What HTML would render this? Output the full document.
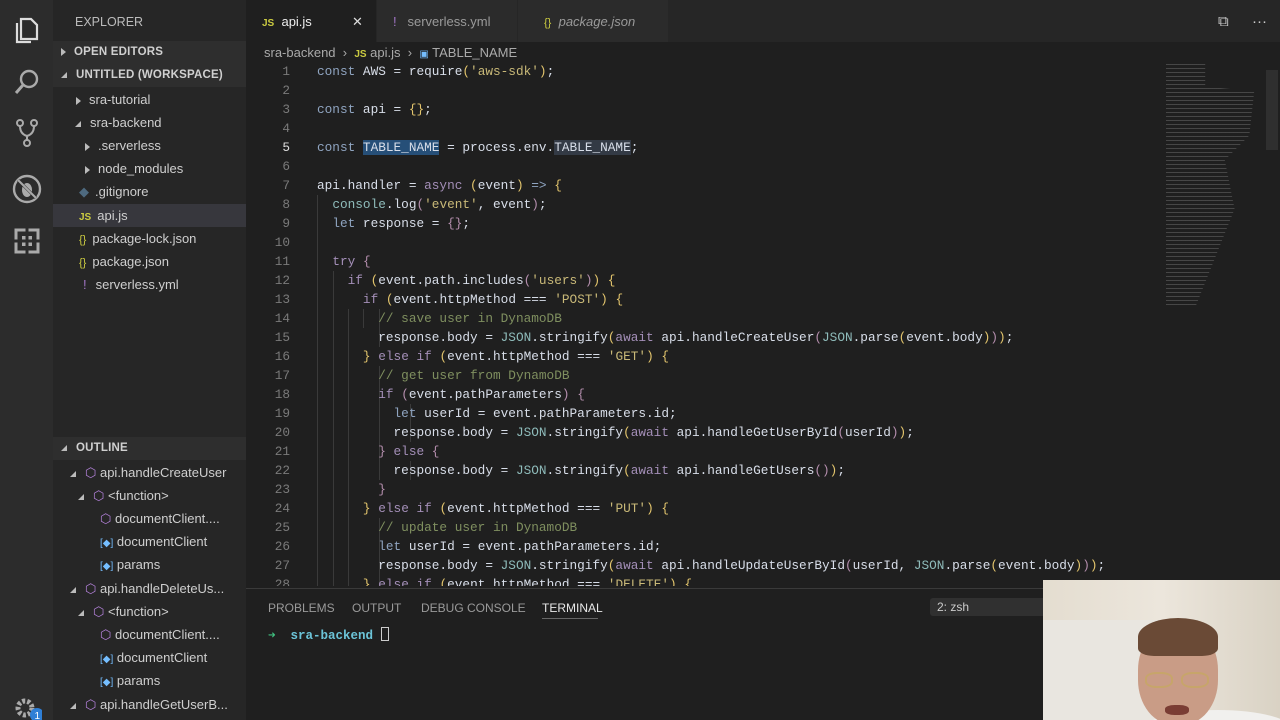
<!DOCTYPE html>
<html><head><meta charset="utf-8"><style>
*{margin:0;padding:0;box-sizing:border-box}
body{width:1280px;height:720px;overflow:hidden;background:#1f1f1f;font-family:"Liberation Sans",sans-serif;position:relative;color:#ccc}
.abs{position:absolute}
#act{left:0;top:0;width:53px;height:720px;background:#2c2c2c}
#side{left:53px;top:0;width:193px;height:720px;background:#262626}
#tabs{left:246px;top:0;width:1034px;height:42px;background:#262626}
.tab{position:absolute;top:0;height:42px;font-size:13px;line-height:44px;color:#9a9a9a}
.row{position:absolute;left:53px;width:193px;height:23px;line-height:23px;font-size:13px;color:#cfcfcf;white-space:nowrap;overflow:hidden}
.hdr{font-weight:bold;font-size:11.5px;color:#d0d0d0;letter-spacing:.2px}
.tri{display:inline-block;width:0;height:0;border-left:5px solid #bbb;border-top:4px solid transparent;border-bottom:4px solid transparent;margin-right:8px;vertical-align:middle}
.dn{display:inline-block;width:0;height:0;border-right:6px solid #bbb;border-top:6px solid transparent;margin-right:9px;vertical-align:middle}
#code{left:250px;top:62px;width:920px;height:524px;overflow:hidden;font-family:"Liberation Mono",monospace;font-size:12.75px;line-height:19.02px;white-space:pre;color:#d8dee9}
.ln{position:absolute;left:0;width:40px;text-align:right;color:#7a7a7a}
.cl{position:absolute;left:67px}
.k{color:#8fa4c0}.kp{color:#a48fb8}.s{color:#c9b978}.c{color:#7f8f5f}.j{color:#8fbcbb}.y{color:#e3c56d}.p{color:#b48ead}
.sel{background:#264f78}
.ig{position:absolute;width:1px;background:#3a3a3a}
#panel{left:246px;top:588px;width:1034px;height:132px;background:#1f1f1f;border-top:1px solid #3a3a3a}
.pt{position:absolute;top:12px;font-size:12px;color:#9a9a9a}
</style></head><body>
<div id="act" class="abs">
<svg class="abs" style="left:14px;top:16px" width="26" height="28" viewBox="0 0 26 28"><path d="M7 3h10l6 6v14H7z" fill="none" stroke="#ddd" stroke-width="2.2"/><path d="M3 7v19h14" fill="none" stroke="#ddd" stroke-width="2.2"/></svg>
<svg class="abs" style="left:13px;top:68px" width="28" height="28"><circle cx="16" cy="11" r="8" fill="none" stroke="#aaa" stroke-width="2.4"/><path d="M10 17L3 25" stroke="#aaa" stroke-width="3"/></svg>
<svg class="abs" style="left:15px;top:118px" width="24" height="30"><circle cx="5" cy="5" r="3" fill="none" stroke="#aaa" stroke-width="2"/><circle cx="19" cy="5" r="3" fill="none" stroke="#aaa" stroke-width="2"/><circle cx="12" cy="25" r="3" fill="none" stroke="#aaa" stroke-width="2"/><path d="M5 8q0 8 7 10M19 8q0 8-7 10v4" fill="none" stroke="#aaa" stroke-width="2"/></svg>
<svg class="abs" style="left:11px;top:173px" width="32" height="32"><circle cx="16" cy="16" r="13" fill="none" stroke="#aaa" stroke-width="2.4"/><ellipse cx="16" cy="17" rx="5" ry="7" fill="#aaa"/><path d="M7 7l18 18" stroke="#2c2c2c" stroke-width="3"/><path d="M7 7l18 18" stroke="#aaa" stroke-width="2"/></svg>
<svg class="abs" style="left:14px;top:228px" width="26" height="26"><rect x="2" y="2" width="22" height="22" fill="none" stroke="#aaa" stroke-width="3"/><rect x="8" y="8" width="10" height="10" fill="#aaa"/><path d="M13 0v26M0 13h26" stroke="#2c2c2c" stroke-width="3"/></svg>
<svg class="abs" style="left:12px;top:695px" width="30" height="25"><circle cx="13" cy="13" r="7" fill="none" stroke="#aaa" stroke-width="5" stroke-dasharray="3 2"/><circle cx="25" cy="20" r="7" fill="#2f7fd6"/><text x="22.5" y="24" font-size="10" fill="#fff" font-family="Liberation Sans">1</text></svg>
</div>
<div id="side" class="abs"></div>
<div class="row" style="top:11px;left:75px;font-size:12.5px;color:#bbb">EXPLORER</div>
<div class="row hdr" style="top:41px;background:#2e2e2e;padding-left:8px"><span class="tri"></span>OPEN EDITORS</div>
<div class="row hdr" style="top:64px;background:#2e2e2e;padding-left:8px"><span class="dn"></span>UNTITLED (WORKSPACE)</div>
<div class="row" style="top:88px;padding-left:23px"><span class="tri"></span>sra-tutorial</div>
<div class="row" style="top:111px;padding-left:22px"><span class="dn"></span>sra-backend</div>
<div class="row" style="top:134px;padding-left:32px"><span class="tri"></span>.serverless</div>
<div class="row" style="top:157px;padding-left:32px"><span class="tri"></span>node_modules</div>
<div class="row" style="top:180px;padding-left:26px"><span style="color:#4e6a80;margin-right:6px">◆</span>.gitignore</div>
<div class="row" style="top:204px;background:#37373d;padding-left:26px"><span style="color:#cbcb41;font-size:10px;font-weight:bold;margin-right:6px">JS</span>api.js</div>
<div class="row" style="top:227px;padding-left:26px"><span style="color:#cbcb41;font-size:11px;margin-right:6px">{}</span>package-lock.json</div>
<div class="row" style="top:250px;padding-left:26px"><span style="color:#cbcb41;font-size:11px;margin-right:6px">{}</span>package.json</div>
<div class="row" style="top:273px;padding-left:30px"><span style="color:#a074c4;margin-right:9px">!</span>serverless.yml</div>
<div class="row hdr" style="top:437px;background:#2e2e2e;padding-left:8px"><span class="dn"></span>OUTLINE</div>
<div class="row" style="top:461px;padding-left:17px"><span class="dn"></span><span style="color:#b180d7">⬡</span> api.handleCreateUser</div>
<div class="row" style="top:484px;padding-left:25px"><span class="dn"></span><span style="color:#b180d7">⬡</span> &lt;function&gt;</div>
<div class="row" style="top:507px;padding-left:47px"><span style="color:#b180d7">⬡</span> documentClient....</div>
<div class="row" style="top:530px;padding-left:47px"><span style="color:#75beff;font-size:10px">[◆]</span> documentClient</div>
<div class="row" style="top:553px;padding-left:47px"><span style="color:#75beff;font-size:10px">[◆]</span> params</div>
<div class="row" style="top:577px;padding-left:17px"><span class="dn"></span><span style="color:#b180d7">⬡</span> api.handleDeleteUs...</div>
<div class="row" style="top:600px;padding-left:25px"><span class="dn"></span><span style="color:#b180d7">⬡</span> &lt;function&gt;</div>
<div class="row" style="top:623px;padding-left:47px"><span style="color:#b180d7">⬡</span> documentClient....</div>
<div class="row" style="top:646px;padding-left:47px"><span style="color:#75beff;font-size:10px">[◆]</span> documentClient</div>
<div class="row" style="top:669px;padding-left:47px"><span style="color:#75beff;font-size:10px">[◆]</span> params</div>
<div class="row" style="top:693px;padding-left:17px"><span class="dn"></span><span style="color:#b180d7">⬡</span> api.handleGetUserB...</div>

<div id="tabs" class="abs">
<div class="tab" style="left:0;width:130px;background:#1f1f1f;color:#eee;padding-left:16px"><span style="color:#cbcb41;font-size:10px;font-weight:bold">JS</span>&nbsp; api.js<span style="position:absolute;left:106px;color:#ddd">✕</span></div>
<div class="tab" style="left:131px;width:140px;background:#2b2b2b;padding-left:16px"><span style="color:#a074c4">!</span>&nbsp;&nbsp; serverless.yml</div>
<div class="tab" style="left:272px;width:150px;background:#2b2b2b;padding-left:26px;font-style:italic"><span style="color:#cbcb41;font-style:normal;font-size:11px">{}</span>&nbsp; package.json</div>
<div class="tab" style="left:972px;color:#ccc;font-size:15px">⧉</div>
<div class="tab" style="left:1006px;color:#ccc;font-size:15px">···</div>
</div>
<div class="abs" style="left:264px;top:44px;font-size:13px;color:#aaa;line-height:17px">sra-backend &nbsp;›&nbsp; <span style="color:#cbcb41;font-size:10px;font-weight:bold">JS</span> api.js &nbsp;›&nbsp; <span style="color:#75beff;font-size:10px">▣</span> TABLE_NAME</div>

<div id="code" class="abs">
<div class="ig" style="left:67px;top:133px;height:400px"></div>
<div class="ig" style="left:83px;top:209px;height:330px"></div>
<div class="ig" style="left:98px;top:247px;height:280px"></div>
<div class="ig" style="left:113px;top:247px;height:19px"></div>
<div class="ig" style="left:129px;top:247px;height:38px"></div>
<div class="ig" style="left:129px;top:304px;height:114px"></div>
<div class="ig" style="left:129px;top:456px;height:76px"></div>
<div class="ig" style="left:160px;top:342px;height:38px"></div>
<div class="ig" style="left:160px;top:399px;height:19px"></div>
<div class="ln" style="top:0">1</div><div class="cl" style="top:0"><span class="k">const</span> AWS = require<span class="y">(</span><span class="s">'aws-sdk'</span><span class="y">)</span>;</div>
<div class="ln" style="top:19px">2</div>
<div class="ln" style="top:38px">3</div><div class="cl" style="top:38px"><span class="k">const</span> api = <span class="y">{}</span>;</div>
<div class="ln" style="top:57px">4</div>
<div class="ln" style="top:76px;color:#ddd">5</div><div class="cl" style="top:76px"><span class="k">const</span> <span class="sel">TABLE_NAME</span> = process.env.<span style="background:#333a45">TABLE_NAME</span>;</div>
<div class="ln" style="top:95px">6</div>
<div class="ln" style="top:114px">7</div><div class="cl" style="top:114px">api.handler = <span class="kp">async</span> <span class="y">(</span>event<span class="y">)</span> <span class="k">=&gt;</span> <span class="y">{</span></div>
<div class="ln" style="top:133px">8</div><div class="cl" style="top:133px">  <span class="j">console</span>.log<span class="p">(</span><span class="s">'event'</span>, event<span class="p">)</span>;</div>
<div class="ln" style="top:152px">9</div><div class="cl" style="top:152px">  <span class="k">let</span> response = <span class="p">{}</span>;</div>
<div class="ln" style="top:171px">10</div>
<div class="ln" style="top:190px">11</div><div class="cl" style="top:190px">  <span class="kp">try</span> <span class="p">{</span></div>
<div class="ln" style="top:209px">12</div><div class="cl" style="top:209px">    <span class="kp">if</span> <span class="y">(</span>event.path.includes<span class="p">(</span><span class="s">'users'</span><span class="p">)</span><span class="y">)</span> <span class="y">{</span></div>
<div class="ln" style="top:228px">13</div><div class="cl" style="top:228px">      <span class="kp">if</span> <span class="y">(</span>event.httpMethod === <span class="s">'POST'</span><span class="y">)</span> <span class="y">{</span></div>
<div class="ln" style="top:247px">14</div><div class="cl" style="top:247px">        <span class="c">// save user in DynamoDB</span></div>
<div class="ln" style="top:266px">15</div><div class="cl" style="top:266px">        response.body = <span class="j">JSON</span>.stringify<span class="y">(</span><span class="kp">await</span> api.handleCreateUser<span class="p">(</span><span class="j">JSON</span>.parse<span class="y">(</span>event.body<span class="y">)</span><span class="p">)</span><span class="y">)</span>;</div>
<div class="ln" style="top:285px">16</div><div class="cl" style="top:285px">      <span class="y">}</span> <span class="kp">else if</span> <span class="y">(</span>event.httpMethod === <span class="s">'GET'</span><span class="y">)</span> <span class="y">{</span></div>
<div class="ln" style="top:304px">17</div><div class="cl" style="top:304px">        <span class="c">// get user from DynamoDB</span></div>
<div class="ln" style="top:323px">18</div><div class="cl" style="top:323px">        <span class="kp">if</span> <span class="p">(</span>event.pathParameters<span class="p">)</span> <span class="p">{</span></div>
<div class="ln" style="top:342px">19</div><div class="cl" style="top:342px">          <span class="k">let</span> userId = event.pathParameters.id;</div>
<div class="ln" style="top:361px">20</div><div class="cl" style="top:361px">          response.body = <span class="j">JSON</span>.stringify<span class="y">(</span><span class="kp">await</span> api.handleGetUserById<span class="p">(</span>userId<span class="p">)</span><span class="y">)</span>;</div>
<div class="ln" style="top:380px">21</div><div class="cl" style="top:380px">        <span class="p">}</span> <span class="kp">else</span> <span class="p">{</span></div>
<div class="ln" style="top:399px">22</div><div class="cl" style="top:399px">          response.body = <span class="j">JSON</span>.stringify<span class="y">(</span><span class="kp">await</span> api.handleGetUsers<span class="p">()</span><span class="y">)</span>;</div>
<div class="ln" style="top:418px">23</div><div class="cl" style="top:418px">        <span class="p">}</span></div>
<div class="ln" style="top:437px">24</div><div class="cl" style="top:437px">      <span class="y">}</span> <span class="kp">else if</span> <span class="y">(</span>event.httpMethod === <span class="s">'PUT'</span><span class="y">)</span> <span class="y">{</span></div>
<div class="ln" style="top:456px">25</div><div class="cl" style="top:456px">        <span class="c">// update user in DynamoDB</span></div>
<div class="ln" style="top:475px">26</div><div class="cl" style="top:475px">        <span class="k">let</span> userId = event.pathParameters.id;</div>
<div class="ln" style="top:494px">27</div><div class="cl" style="top:494px">        response.body = <span class="j">JSON</span>.stringify<span class="y">(</span><span class="kp">await</span> api.handleUpdateUserById<span class="p">(</span>userId, <span class="j">JSON</span>.parse<span class="y">(</span>event.body<span class="y">)</span><span class="p">)</span><span class="y">)</span>;</div>
<div class="ln" style="top:513px">28</div><div class="cl" style="top:513px">      <span class="y">}</span> <span class="kp">else if</span> <span class="y">(</span>event.httpMethod === <span class="s">'DELETE'</span><span class="y">)</span> <span class="y">{</span></div>
</div>
<div class="abs" style="left:1166px;top:62px;width:98px;height:245px;opacity:.45;background:repeating-linear-gradient(#1f1f1f 0 2px,#777 2px 3px,#1f1f1f 3px 4px);clip-path:polygon(0 0,40% 0,40% 10%,90% 12%,85% 30%,60% 40%,70% 60%,50% 80%,30% 100%,0 100%)"></div>
<div class="abs" style="left:1266px;top:70px;width:12px;height:80px;background:#2f2f2f"></div>

<div id="panel" class="abs">
<div class="pt" style="left:22px">PROBLEMS</div>
<div class="pt" style="left:106px">OUTPUT</div>
<div class="pt" style="left:175px">DEBUG CONSOLE</div>
<div class="pt" style="left:296px;color:#e7e7e7">TERMINAL</div>
<div class="abs" style="left:296px;top:29px;width:56px;height:1px;background:#666"></div>
<div class="abs" style="left:684px;top:9px;width:120px;height:18px;background:#303030;border-radius:3px;font-size:12px;color:#ccc;padding:2px 0 0 7px">2: zsh</div>
<div class="abs" style="left:22px;top:38px;font-family:'Liberation Mono',monospace;font-size:12.5px"><span style="color:#3fbf7f">➜</span>&nbsp; <span style="color:#6cc4d8;font-weight:bold">sra-backend</span> <span style="display:inline-block;width:8px;height:14px;border:1px solid #ccc;vertical-align:-2px"></span></div>
</div>

<div class="abs" style="left:1043px;top:580px;width:237px;height:140px;background:linear-gradient(90deg,#e4ddd0,#ece6dc 50%,#d9d2c4);overflow:hidden">
<div class="abs" style="left:0;top:40px;width:120px;height:100px;background:#e9e6e0"></div>
<div class="abs" style="left:100px;top:130px;width:150px;height:40px;background:#f1f0ee;border-radius:50% 50% 0 0"></div>
<div class="abs" style="left:95px;top:45px;width:80px;height:100px;background:#c99c86;border-radius:45%"></div>
<div class="abs" style="left:95px;top:38px;width:80px;height:38px;background:#6a4a36;border-radius:50% 50% 20% 20%"></div>
<div class="abs" style="left:102px;top:92px;width:28px;height:16px;border:2px solid #c7a56a;border-radius:40%"></div>
<div class="abs" style="left:138px;top:92px;width:28px;height:16px;border:2px solid #c7a56a;border-radius:40%"></div>
<div class="abs" style="left:122px;top:125px;width:24px;height:10px;background:#7a3d34;border-radius:40%"></div>
</div>
</body></html>
